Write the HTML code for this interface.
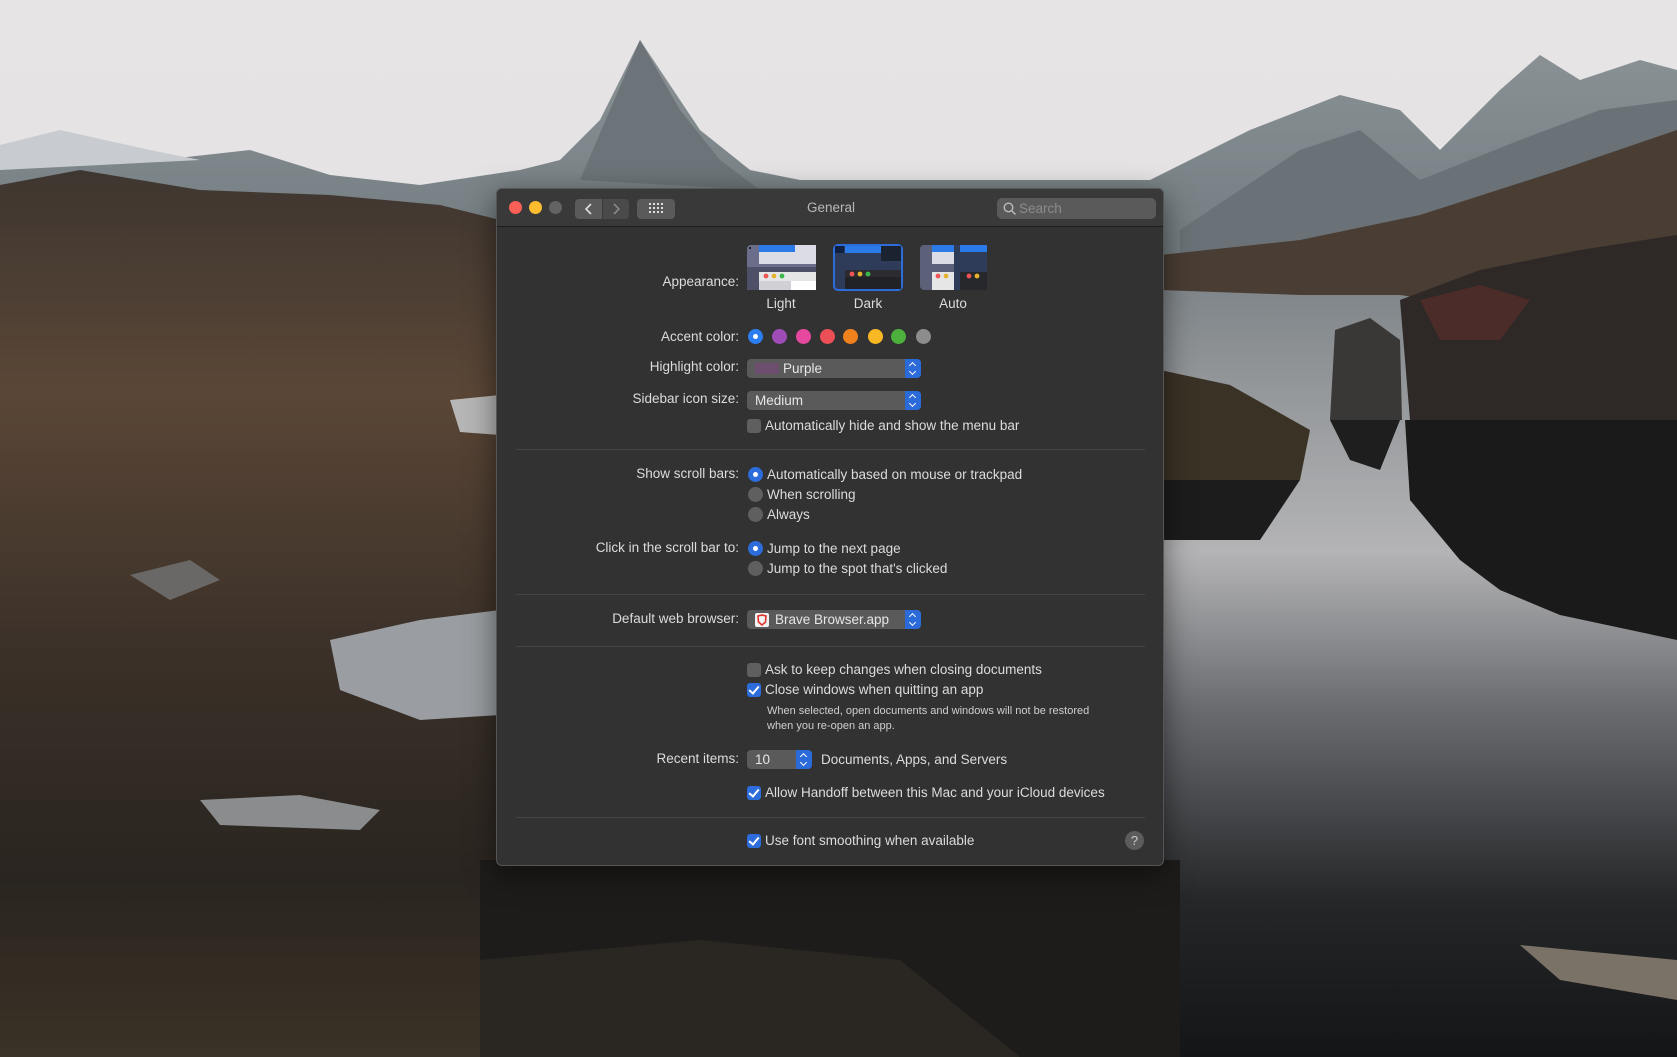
<!DOCTYPE html>
<html><head><meta charset="utf-8"><style>
*{margin:0;padding:0;box-sizing:border-box}
body{width:1677px;height:1057px;overflow:hidden;position:relative;font-family:"Liberation Sans",sans-serif;background:#222}
#bg{position:absolute;left:0;top:0}
.win{position:absolute;left:496px;top:188px;width:668px;height:678px;background:#323232;border:1px solid #555;border-radius:6px;box-shadow:0 8px 30px rgba(0,0,0,.5);overflow:hidden}
.tb{position:absolute;left:0;top:0;width:100%;height:38px;background:#393939;border-bottom:1px solid #1e1e1e}
.a{position:absolute;color:#dcdcdc;font-size:13.5px;white-space:nowrap;line-height:16px}
.lbl{position:absolute;color:#dcdcdc;font-size:13.5px;white-space:nowrap;line-height:16px;right:424px;text-align:right}
.dot{position:absolute;border-radius:50%}
.sep{position:absolute;left:19px;width:629px;height:1px;background:#454545}
.pop{position:absolute;height:19px;background:#5a5a5a;border-radius:4px;color:#e6e6e6;font-size:13.5px;line-height:19px;padding-left:8px}
.pop .st{position:absolute;right:0;top:0;width:16px;height:19px;background:#2b6ad9;border-radius:0 4px 4px 0}
.pop .st:before{content:"";position:absolute;left:5px;top:4px;width:4px;height:4px;border-left:1.3px solid #fff;border-top:1.3px solid #fff;transform:rotate(45deg)}
.pop .st:after{content:"";position:absolute;left:5px;top:10px;width:4px;height:4px;border-right:1.3px solid #fff;border-bottom:1.3px solid #fff;transform:rotate(45deg)}
.cb{position:absolute;width:14px;height:14px;border-radius:3px;background:#5f5f5f}
.cb.on{background:#2c6cdb}
.cb.on:after{content:"";position:absolute;left:4px;top:1px;width:4px;height:8px;border-right:2px solid #fff;border-bottom:2px solid #fff;transform:rotate(40deg)}
.rd{position:absolute;width:15px;height:15px;border-radius:50%;background:#5f5f5f}
.rd.on{background:#2c6cdb}
.rd.on:after{content:"";position:absolute;left:5px;top:5px;width:5px;height:5px;border-radius:50%;background:#fff}
</style></head><body>
<svg id="bg" width="1677" height="1057" viewBox="0 0 1677 1057">
<defs>
<linearGradient id="sky" x1="0" y1="0" x2="0" y2="1"><stop offset="0" stop-color="#e6e4e4"/><stop offset="1" stop-color="#dedcdc"/></linearGradient>
<linearGradient id="lake" x1="0" y1="0" x2="0" y2="1"><stop offset="0" stop-color="#7e8488"/><stop offset=".35" stop-color="#b4b4b6"/><stop offset=".55" stop-color="#6a6c70"/><stop offset=".8" stop-color="#242628"/><stop offset="1" stop-color="#141516"/></linearGradient>
<linearGradient id="gr" x1="0" y1="0" x2="0" y2="1"><stop offset="0" stop-color="#3e3630"/><stop offset=".25" stop-color="#5a4636"/><stop offset=".55" stop-color="#3a3028"/><stop offset=".8" stop-color="#2a2520"/><stop offset="1" stop-color="#3a3226"/></linearGradient>
<linearGradient id="mt" x1="0" y1="0" x2="0" y2="1"><stop offset="0" stop-color="#8a9296"/><stop offset="1" stop-color="#6e787c"/></linearGradient>
</defs>
<rect width="1677" height="1057" fill="url(#sky)"/>
<polygon points="0,150 70,135 160,160 250,150 330,175 420,185 520,170 560,160 600,120 640,40 660,70 700,130 750,170 800,180 1150,180 1250,130 1340,95 1400,110 1440,150 1500,90 1540,55 1580,80 1640,60 1677,70 1677,300 0,300" fill="url(#mt)"/>
<polygon points="0,145 60,130 150,150 200,160 0,170" fill="#c8ccd0"/>
<polygon points="580,180 640,40 680,110 720,160 760,190" fill="#6c7479"/>
<polygon points="1180,230 1300,150 1360,130 1420,180 1520,140 1600,110 1677,100 1677,300 1180,300" fill="#6a7277"/>
<rect x="1160" y="280" width="517" height="777" fill="url(#lake)"/>
<polygon points="1160,255 1300,240 1420,215 1560,170 1677,130 1677,330 1500,310 1400,295 1300,295 1160,290" fill="#4a3e34"/>
<polygon points="1400,300 1480,270 1580,250 1677,235 1677,420 1520,420 1410,420" fill="#2e2826"/>
<polygon points="1420,300 1480,285 1530,300 1500,340 1440,340" fill="#5a2e2a" opacity=".7"/>
<polygon points="1335,330 1370,318 1400,340 1402,420 1330,420" fill="#3a3836"/>
<polygon points="1405,420 1677,420 1677,640 1560,615 1500,590 1460,560 1410,500" fill="#1a1a1a"/>
<polygon points="1330,420 1400,420 1380,470 1350,460" fill="#1e1e1e"/>
<polygon points="1160,370 1230,385 1310,430 1300,480 1200,490 1160,480" fill="#3b3226"/>
<polygon points="1160,480 1300,480 1260,540 1160,540" fill="#1c1c1c"/>
<polygon points="0,185 80,170 200,190 330,195 440,205 500,220 500,1057 0,1057" fill="url(#gr)"/>
<rect x="480" y="860" width="700" height="197" fill="#2a2622"/>
<polygon points="480,860 1180,860 1180,1057 1020,1057 900,960 700,940 480,960" fill="#1e1c1a"/>
<polygon points="330,640 420,620 500,610 500,715 420,720 340,690" fill="#9a9ea2"/>
<polygon points="450,400 500,395 500,435 460,432" fill="#b6b6b6"/>
<polygon points="200,800 300,795 380,810 360,830 220,825" fill="#8a8c8e"/>
<polygon points="130,575 190,560 220,580 170,600" fill="#6a6866"/>
<polygon points="1520,945 1677,960 1677,1000 1560,980" fill="#7a7266"/>
</svg>

<div class="win">
<div class="tb">
<div class="dot" style="left:12px;top:12px;width:13px;height:13px;background:#fc5f57"></div>
<div class="dot" style="left:32px;top:12px;width:13px;height:13px;background:#fdbb2e"></div>
<div class="dot" style="left:52px;top:12px;width:13px;height:13px;background:#636363"></div>
<div style="position:absolute;left:78px;top:10px;width:27px;height:20px;background:#5a5a5a;border-radius:4px 0 0 4px"></div>
<div style="position:absolute;left:106px;top:10px;width:26px;height:20px;background:#4a4a4a;border-radius:0 4px 4px 0"></div>
<svg style="position:absolute;left:78px;top:10px" width="54" height="20"><path d="M16 5 L11 10 L16 15" stroke="#ddd" stroke-width="1.6" fill="none"/><path d="M39 5 L44 10 L39 15" stroke="#888" stroke-width="1.6" fill="none"/></svg>
<div style="position:absolute;left:140px;top:10px;width:38px;height:20px;background:#5a5a5a;border-radius:4px"></div>
<svg style="position:absolute;left:152px;top:13px" width="14" height="14"><g fill="#ddd"><rect x="0" y="1" width="2" height="2"/><rect x="4" y="1" width="2" height="2"/><rect x="8" y="1" width="2" height="2"/><rect x="12" y="1" width="2" height="2"/><rect x="0" y="5" width="2" height="2"/><rect x="4" y="5" width="2" height="2"/><rect x="8" y="5" width="2" height="2"/><rect x="12" y="5" width="2" height="2"/><rect x="0" y="9" width="2" height="2"/><rect x="4" y="9" width="2" height="2"/><rect x="8" y="9" width="2" height="2"/><rect x="12" y="9" width="2" height="2"/></g></svg>
<div class="a" style="left:0;width:668px;text-align:center;top:11px;color:#b8b8b8">General</div>
<div style="position:absolute;left:500px;top:9px;width:159px;height:21px;background:#5a5a5a;border-radius:5px"></div>
<svg style="position:absolute;left:506px;top:13px" width="14" height="14"><circle cx="5.5" cy="5.5" r="4.3" stroke="#bbb" stroke-width="1.4" fill="none"/><path d="M8.5 8.5 L12.5 12.5" stroke="#bbb" stroke-width="1.5"/></svg>
<div class="a" style="left:522px;top:12px;color:#8c8c8c">Search</div>
</div>

<div class="lbl" style="top:85px">Appearance:</div>
<svg style="position:absolute;left:250px;top:56px" width="69" height="45" viewBox="0 0 69 45"><rect x="0" y="0" width="69" height="45" rx="4" fill="#6b6e8a"/><rect x="0" y="22" width="69" height="23" fill="#4d5066"/><rect x="12" y="0" width="36" height="19" fill="#dcdce6"/><rect x="12" y="0" width="36" height="7" fill="#2a7ae8"/><rect x="48" y="0" width="21" height="19" fill="#dcdce6"/><rect x="12" y="27" width="57" height="18" fill="#e6e6e6"/><rect x="12" y="36" width="57" height="9" fill="#d0d0d6"/><rect x="44" y="36" width="25" height="9" fill="#fff"/><circle cx="19" cy="31" r="2.4" fill="#e55"/><circle cx="27" cy="31" r="2.4" fill="#e5b32e"/><circle cx="35" cy="31" r="2.4" fill="#3bb84a"/><rect x="2" y="2" width="2" height="2" fill="#222"/></svg>
<svg style="position:absolute;left:336px;top:55px" width="70" height="47" viewBox="0 0 70 47"><rect x="1" y="1" width="68" height="45" rx="4" fill="#2e3c5a" stroke="#2c6cdb" stroke-width="2"/><rect x="2" y="2" width="9" height="7" fill="#102040"/><rect x="12" y="2" width="36" height="7" fill="#2a7ae8"/><rect x="48" y="2" width="20" height="15" fill="#1b2230"/><rect x="12" y="26" width="56" height="19" fill="#2c2c30"/><rect x="12" y="33" width="56" height="12" fill="#202226"/><circle cx="19" cy="30" r="2.4" fill="#e55"/><circle cx="27" cy="30" r="2.4" fill="#e5b32e"/><circle cx="35" cy="30" r="2.4" fill="#3bb84a"/></svg>
<svg style="position:absolute;left:423px;top:56px" width="67" height="45" viewBox="0 0 67 45"><rect x="0" y="0" width="67" height="45" rx="4" fill="#5c6078"/><rect x="12" y="0" width="22" height="19" fill="#dcdce6"/><rect x="12" y="0" width="22" height="7" fill="#2a7ae8"/><rect x="12" y="27" width="22" height="18" fill="#e6e6e6"/><rect x="34" y="0" width="33" height="45" fill="#2e3c5a"/><rect x="40" y="0" width="27" height="7" fill="#2a7ae8"/><rect x="40" y="27" width="27" height="18" fill="#26282c"/><circle cx="18" cy="31" r="2.4" fill="#e55"/><circle cx="26" cy="31" r="2.4" fill="#e5b32e"/><circle cx="49" cy="31" r="2.4" fill="#e55"/><circle cx="57" cy="31" r="2.4" fill="#e5b32e"/></svg>
<div class="a" style="left:264px;top:107px;width:40px;text-align:center">Light</div>
<div class="a" style="left:351px;top:107px;width:40px;text-align:center">Dark</div>
<div class="a" style="left:436px;top:107px;width:40px;text-align:center">Auto</div>

<div class="lbl" style="top:140px">Accent color:</div>
<div class="dot" style="left:251px;top:140px;width:15px;height:15px;background:#2c7ef0"></div><div class="dot" style="left:256px;top:145px;width:5px;height:5px;background:#fff"></div>
<div class="dot" style="left:275px;top:140px;width:15px;height:15px;background:#9e4cb6"></div>
<div class="dot" style="left:299px;top:140px;width:15px;height:15px;background:#e5489e"></div>
<div class="dot" style="left:323px;top:140px;width:15px;height:15px;background:#ec4f55"></div>
<div class="dot" style="left:346px;top:140px;width:15px;height:15px;background:#f0821e"></div>
<div class="dot" style="left:371px;top:140px;width:15px;height:15px;background:#f8b824"></div>
<div class="dot" style="left:394px;top:140px;width:15px;height:15px;background:#4daf3c"></div>
<div class="dot" style="left:419px;top:140px;width:15px;height:15px;background:#8c8c8c"></div>

<div class="lbl" style="top:170px">Highlight color:</div>
<div class="pop" style="left:250px;top:170px;width:174px;padding-left:36px"><span style="position:absolute;left:8px;top:4px;width:24px;height:11px;background:#6e4e6e"></span>Purple<span class="st"></span></div>
<div class="lbl" style="top:202px">Sidebar icon size:</div>
<div class="pop" style="left:250px;top:202px;width:174px">Medium<span class="st"></span></div>
<div class="cb" style="left:250px;top:230px"></div>
<div class="a" style="left:268px;top:229px">Automatically hide and show the menu bar</div>
<div class="sep" style="top:260px"></div>

<div class="lbl" style="top:277px">Show scroll bars:</div>
<div class="rd on" style="left:251px;top:278px"></div><div class="a" style="left:270px;top:278px">Automatically based on mouse or trackpad</div>
<div class="rd" style="left:251px;top:298px"></div><div class="a" style="left:270px;top:298px">When scrolling</div>
<div class="rd" style="left:251px;top:318px"></div><div class="a" style="left:270px;top:318px">Always</div>
<div class="lbl" style="top:351px">Click in the scroll bar to:</div>
<div class="rd on" style="left:251px;top:352px"></div><div class="a" style="left:270px;top:352px">Jump to the next page</div>
<div class="rd" style="left:251px;top:372px"></div><div class="a" style="left:270px;top:372px">Jump to the spot that's clicked</div>
<div class="sep" style="top:405px"></div>

<div class="lbl" style="top:422px">Default web browser:</div>
<div class="pop" style="left:250px;top:421px;width:174px;padding-left:28px"><svg style="position:absolute;left:8px;top:3px" width="14" height="14"><rect width="14" height="14" rx="2" fill="#f3f3f3"/><path d="M3 3 L7 2 L11 3 L10.5 9 L7 12 L3.5 9 Z" fill="none" stroke="#e2312b" stroke-width="1.6"/></svg>Brave Browser.app<span class="st"></span></div>
<div class="sep" style="top:457px"></div>

<div class="cb" style="left:250px;top:474px"></div><div class="a" style="left:268px;top:473px">Ask to keep changes when closing documents</div>
<div class="cb on" style="left:250px;top:494px"></div><div class="a" style="left:268px;top:493px">Close windows when quitting an app</div>
<div class="a" style="left:270px;top:515px;font-size:11px;line-height:15px;color:#cfcfcf">When selected, open documents and windows will not be restored<br>when you re-open an app.</div>
<div class="lbl" style="top:562px">Recent items:</div>
<div class="pop" style="left:250px;top:561px;width:65px">10<span class="st"></span></div>
<div class="a" style="left:324px;top:563px">Documents, Apps, and Servers</div>
<div class="cb on" style="left:250px;top:597px"></div><div class="a" style="left:268px;top:596px">Allow Handoff between this Mac and your iCloud devices</div>
<div class="sep" style="top:628px"></div>
<div class="cb on" style="left:250px;top:645px"></div><div class="a" style="left:268px;top:644px">Use font smoothing when available</div>
<div class="dot" style="left:628px;top:642px;width:19px;height:19px;background:#5c5c5c;color:#ccc;font-size:13px;text-align:center;line-height:19px">?</div>
</div>
</body></html>
